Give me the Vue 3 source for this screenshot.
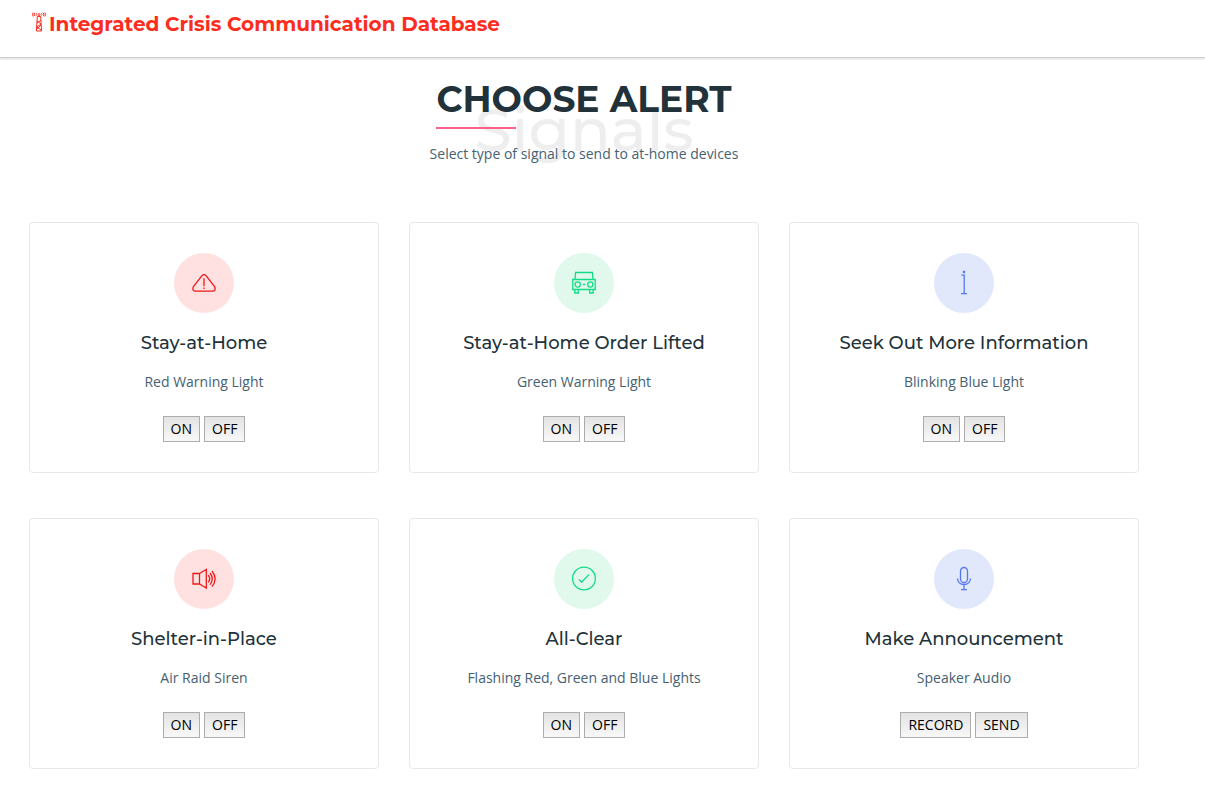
<script setup>
const alerts = [
  { title: 'Stay-at-Home', text: 'Red Warning Light', tone: 'red', icon: 'warning', actions: ['ON', 'OFF'] },
  { title: 'Stay-at-Home Order Lifted', text: 'Green Warning Light', tone: 'green', icon: 'car', actions: ['ON', 'OFF'] },
  { title: 'Seek Out More Information', text: 'Blinking Blue Light', tone: 'blue', icon: 'info', actions: ['ON', 'OFF'] },
  { title: 'Shelter-in-Place', text: 'Air Raid Siren', tone: 'red', icon: 'speaker', actions: ['ON', 'OFF'] },
  { title: 'All-Clear', text: 'Flashing Red, Green and Blue Lights', tone: 'green', icon: 'check', actions: ['ON', 'OFF'] },
  { title: 'Make Announcement', text: 'Speaker Audio', tone: 'blue', icon: 'mic', actions: ['RECORD', 'SEND'] },
]
</script>

<template>
  <div class="page">
    <header class="topbar">
      <svg class="tower" viewBox="0 0 14 20" width="14" height="20" aria-hidden="true">
        <path d="M5.3 4.5L4.4 19h5.2L8.7 4.5zM5 9l4 3-4.3 3L9.4 18M9 8L5 11M9.2 13l-4.6 4" />
        <path d="M4.6 1.3q-1 1 0 2.2M9.4 1.3q1 1 0 2.2M2.8.8q-1.4 1.6 0 3.3M11.2.8q1.4 1.6 0 3.3M1.2.5q-1.4 2 0 4M12.8.5q1.4 2 0 4" />
        <circle cx="7" cy="2.6" r="1" />
      </svg>
      <h1 class="brand">Integrated Crisis Communication Database</h1>
    </header>

    <main class="content">
      <section class="intro">
        <div class="heading">
          <span class="ghost" aria-hidden="true">Signals</span>
          <h2>CHOOSE ALERT</h2>
        </div>
        <p>Select type of signal to send to at-home devices</p>
      </section>

      <section class="grid">
        <article v-for="a in alerts" :key="a.title" class="card">
          <div class="badge" :class="a.tone">
            <svg viewBox="0 0 24 24" width="24" height="24" aria-hidden="true">
              <g v-if="a.icon === 'warning'">
                <path d="M10 4.7Q12 2.5 14 4.7L22.6 15.6Q24.3 19.5 20.8 20.1H3.2Q-.3 19.5 1.4 15.6z" />
                <path d="M12 7.2v8M12 16.6v1.3" />
              </g>
              <g v-else-if="a.icon === 'car'">
                <path d="M3 8.5L3.6 1.5H20.4L21 8.5M.8 8.5H23.2V18.5H.8zM2.8 18.5v3.5h3.5v-3.5M17.7 18.5v3.5h3.5v-3.5M10.8 13.5h2.5" />
                <circle cx="5.7" cy="13.5" r="2.6" />
                <circle cx="18.3" cy="13.5" r="2.6" />
              </g>
              <g v-else-if="a.icon === 'info'">
                <path d="M11.5 .5h1v1h-1zM9.5 4.2h2.7V22.6M9 22.6h6" />
              </g>
              <g v-else-if="a.icon === 'speaker'">
                <path d="M1 6.5h6.5v10.5H1zM7.5 6.5L14.3 2.5V21L7.5 17" />
                <path d="M16.2 8.2q3 3.7 0 7.2M18 6q4.5 5.8 0 11.6M20 4q6.2 7.8 0 15.6" />
              </g>
              <g v-else-if="a.icon === 'check'">
                <circle cx="12" cy="11.5" r="11.4" />
                <path d="M6.8 12.4L9.6 15.2 17.2 7.4" />
              </g>
              <g v-else>
                <rect x="8.5" y=".5" width="7" height="15" rx="3.5" />
                <path d="M5.5 11.5q.5 6 6.5 6t6.5-6M12 17.5v5M9 22.6h6" />
              </g>
            </svg>
          </div>
          <h3>{{ a.title }}</h3>
          <p>{{ a.text }}</p>
          <div class="actions">
            <button v-for="label in a.actions" :key="label" type="button">{{ label }}</button>
          </div>
        </article>
      </section>
    </main>
  </div>
</template>

<style>
body {
  margin: 0;
  background: #fff;
}
</style>

<style scoped>
.page {
  font-family: "Open Sans", sans-serif;
  font-size: 14px;
  line-height: 24px;
  color: #456172;
}
h1, h2, h3, p {
  margin: 0;
}
h1, h2, h3, .ghost {
  font-family: Montserrat, Inter, sans-serif;
}
.topbar {
  display: flex;
  align-items: center;
  gap: 3px;
  box-sizing: border-box;
  height: 58px;
  padding: 0 32px 10px;
  border-bottom: 1px solid #d0d0d0;
  box-shadow: 0 1px 2px rgba(0, 0, 0, 0.15);
}
.tower {
  overflow: visible;
  margin-bottom: 3px;
  fill: none;
  stroke: #fc2d20;
  stroke-width: 1;
}
.brand {
  color: #fc2d20;
  font-size: 20px;
  font-weight: 700;
  line-height: 28px;
}
.content {
  padding: 20px 66px 42px 29px;
}
.intro {
  text-align: center;
}
.heading {
  position: relative;
  display: inline-block;
}
.heading h2 {
  position: relative;
  color: #21323a;
  font-size: 36px;
  font-weight: 700;
  line-height: 43px;
  padding-bottom: 8px;
}
.heading h2::after {
  content: "";
  position: absolute;
  left: 0;
  bottom: 0;
  width: 80px;
  height: 2px;
  background: #ff5e8b;
}
.ghost {
  position: absolute;
  left: 50%;
  top: 16px;
  transform: translateX(-50%);
  color: #eeeeef;
  font-size: 60px;
  font-weight: 500;
  line-height: 72px;
}
.intro p {
  position: relative;
  margin-top: 13px;
}
.grid {
  display: grid;
  grid-template-columns: repeat(3, 1fr);
  gap: 45px 30px;
  margin-top: 56px;
}
.card {
  display: flex;
  flex-direction: column;
  align-items: center;
  padding: 30px;
  border: 1px solid #e8e8e8;
  border-radius: 4px;
  text-align: center;
}
.badge {
  display: grid;
  place-items: center;
  width: 60px;
  height: 60px;
  border-radius: 50%;
}
.badge svg {
  fill: none;
  stroke: currentColor;
  stroke-width: 1.3;
  overflow: visible;
}
.red {
  color: #f01818;
  background: #ffe1e1;
}
.green {
  color: #12dc87;
  background: #e1f8ec;
}
.blue {
  color: #5577f0;
  background: #e1e8fb;
}
.card h3 {
  margin-top: 19px;
  color: #21323a;
  font-size: 18px;
  font-weight: 500;
  line-height: 22px;
}
.card p {
  margin-top: 16px;
}
.actions {
  display: flex;
  gap: 4px;
  margin-top: 22px;
}
.actions button {
  height: 26px;
  padding: 0 7px;
  border: 1px solid #acacac;
  border-radius: 0;
  background: linear-gradient(#e3e3e3, #f8f8f8);
  color: #000;
  font: inherit;
  cursor: pointer;
}
</style>
